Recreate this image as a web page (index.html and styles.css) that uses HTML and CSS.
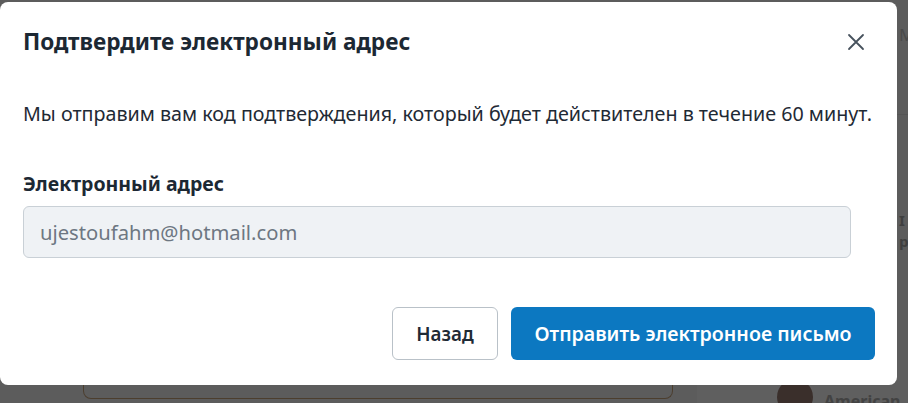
FILE: index.html
```html
<!DOCTYPE html>
<html lang="ru">
<head>
<meta charset="utf-8">
<title>Подтвердите электронный адрес</title>
<link rel="stylesheet" href="styles.css">
</head>
<body>
<div class="page">
  <div class="page-side">
    <div class="side-letter">М</div>
    <div class="side-rule"></div>
    <div class="side-letter side-letter-2">I<br>р</div>
  </div>
  <div class="page-bottom">
    <div class="bottom-card"></div>
    <div class="bottom-col">
      <span class="avatar"></span>
      <span class="bottom-name">American</span>
    </div>
  </div>
</div>
<div class="overlay"></div>
<div class="modal" role="dialog" aria-labelledby="dlg-title">
  <div class="modal-header">
    <h2 class="modal-title" id="dlg-title">Подтвердите электронный адрес</h2>
    <button class="close-btn" aria-label="Закрыть">
      <svg width="18" height="18" viewBox="0 0 18 18"><path d="M2 2 L16 16 M16 2 L2 16" stroke="#47525d" stroke-width="1.8" stroke-linecap="round" fill="none"/></svg>
    </button>
  </div>
  <p class="modal-text">Мы отправим вам код подтверждения, который будет действителен в течение 60 минут.</p>
  <label class="field-label" for="email">Электронный адрес</label>
  <input class="field-input" id="email" type="text" value="ujestoufahm@hotmail.com" readonly>
  <div class="modal-footer">
    <button class="btn btn-secondary">Назад</button>
    <button class="btn btn-primary">Отправить электронное письмо</button>
  </div>
</div>
</body>
</html>
```
FILE: styles.css
```css
* { box-sizing: border-box; }
html, body {
  margin: 0;
  padding: 0;
  width: 908px;
  height: 403px;
  overflow: hidden;
  font-family: "Noto Sans", "Open Sans", sans-serif;
  background: #f3f3f3;
}
.page {
  position: relative;
  width: 908px;
  height: 403px;
}
.page-side {
  position: absolute;
  left: 897px;
  top: 0;
  width: 11px;
  height: 403px;
  overflow: hidden;
}
.side-letter {
  position: absolute;
  left: 2px;
  top: 26px;
  font-size: 17px;
  line-height: 18px;
  color: #c4c4c4;
}
.side-rule {
  position: absolute;
  left: 0;
  top: 114px;
  width: 11px;
  height: 1px;
  background: #e2e2e2;
}
.side-letter-2 {
  top: 210px;
  font-size: 15px;
  line-height: 21px;
  color: #a8a8a8;
  font-weight: 700;
}
.page-bottom {
  position: absolute;
  left: 0;
  top: 360px;
  width: 908px;
  height: 43px;
  display: flex;
}
.bottom-card {
  margin-left: 83px;
  width: 590px;
  height: 39px;
  border: 1px solid #c9a47c;
  border-top: none;
  border-radius: 0 0 8px 8px;
}
.bottom-col {
  margin-left: 24px;
  flex: 1;
  background: #fcfcfc;
  display: flex;
  align-items: flex-end;
  padding-left: 80px;
  gap: 11px;
  overflow: hidden;
}
.avatar {
  width: 36px;
  height: 36px;
  border-radius: 50%;
  background: #9a7d74;
  margin-bottom: -12px;
  flex: none;
}
.bottom-name {
  font-size: 16px;
  line-height: 16px;
  font-weight: 700;
  color: #b0b0b0;
  margin-bottom: -6px;
}
.overlay {
  position: fixed;
  inset: 0;
  background: rgba(0, 0, 0, 0.625);
}
.modal {
  position: fixed;
  left: 0;
  top: 2px;
  width: 897px;
  height: 383px;
  background: #ffffff;
  border-radius: 8px;
  padding: 25px 22px 25px 23px;
  display: flex;
  flex-direction: column;
  align-items: flex-start;
}
.modal-header {
  width: 100%;
  display: flex;
  align-items: center;
  justify-content: space-between;
  height: 30px;
}
.modal-title {
  margin: 0;
  font-size: 22.6px;
  line-height: 30px;
  font-weight: 700;
  color: #1c2833;
}
.close-btn {
  border: none;
  background: none;
  padding: 0;
  margin-right: 10px;
  width: 18px;
  height: 18px;
  display: flex;
  cursor: pointer;
}
.modal-text {
  margin: 44px 0 0;
  font-size: 19.7px;
  line-height: 26px;
  color: #1f2a35;
}
.field-label {
  margin-top: 45px;
  font-size: 19.5px;
  line-height: 24px;
  font-weight: 700;
  color: #1c2833;
}
.field-input {
  margin-top: 10px;
  width: 828px;
  height: 52px;
  background: #eff2f5;
  border: 1px solid #c9d0d6;
  border-radius: 6px;
  padding: 0 16px;
  font-family: inherit;
  font-size: 20.2px;
  color: #6d7782;
  outline: none;
}
.modal-footer {
  margin-top: 49px;
  width: 100%;
  display: flex;
  justify-content: flex-end;
  gap: 13px;
}
.btn {
  height: 53px;
  border-radius: 6px;
  font-family: inherit;
  font-weight: 600;
  padding: 0;
  cursor: pointer;
}
.btn-secondary {
  width: 106px;
  font-size: 18.8px;
  background: #ffffff;
  border: 1px solid #b9c1c8;
  color: #1f2a35;
}
.btn-primary {
  width: 364px;
  font-size: 19.6px;
  background: #0c78c1;
  border: none;
  color: #ffffff;
}
```
